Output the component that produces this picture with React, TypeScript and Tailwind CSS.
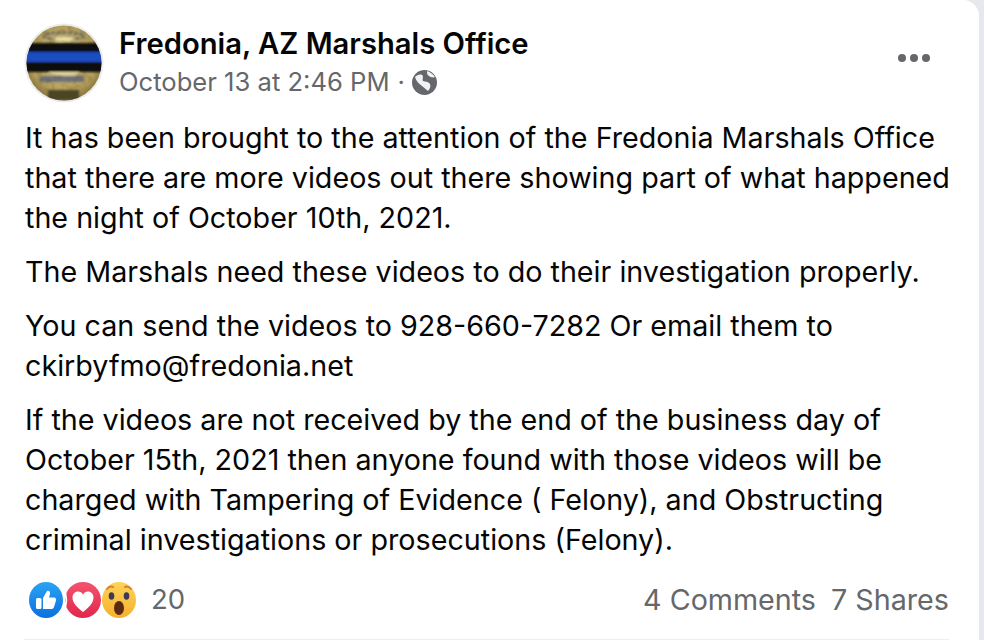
import React from 'react';

const lines: string[][] = [
  [
    'It has been brought to the attention of the Fredonia Marshals Office',
    'that there are more videos out there showing part of what happened',
    'the night of October 10th, 2021.',
  ],
  ['The Marshals need these videos to do their investigation properly.'],
  ['You can send the videos to 928-660-7282 Or email them to', 'ckirbyfmo@fredonia.net'],
  [
    'If the videos are not received by the end of the business day of',
    'October 15th, 2021 then anyone found with those videos will be',
    'charged with Tampering of Evidence ( Felony), and Obstructing',
    'criminal investigations or prosecutions (Felony).',
  ],
];

const Badge = () => (
  <svg width="80" height="80" viewBox="0 0 80 80" className="shrink-0">
    <defs>
      <radialGradient id="gold" cx="50%" cy="45%" r="58%">
        <stop offset="0%" stopColor="#d6c483" />
        <stop offset="70%" stopColor="#b59e5c" />
        <stop offset="100%" stopColor="#6d5d2e" />
      </radialGradient>
      <clipPath id="round">
        <circle cx="40" cy="40" r="37.500" />
      </clipPath>
      <filter id="mottle" x="0" y="0" width="100%" height="100%">
        <feTurbulence type="fractalNoise" baseFrequency="0.16" numOctaves="2" seed="4" />
        <feColorMatrix values="0 0 0 0 0.28  0 0 0 0 0.22  0 0 0 0 0.06  1.8 0 0 0 -0.75" />
      </filter>
      <filter id="soft">
        <feGaussianBlur stdDeviation="0.8" />
      </filter>
    </defs>
    <circle cx="40" cy="40" r="39.500" fill="#ececec" />
    <g clipPath="url(#round)">
      <rect width="80" height="80" fill="url(#gold)" />
      <rect width="80" height="80" filter="url(#mottle)" />
      <g filter="url(#soft)">
        <ellipse cx="40" cy="13" rx="20" ry="3.500" fill="none" stroke="#6a6b66" strokeWidth="2.500" strokeDasharray="4 1.500" />
        <ellipse cx="40" cy="16" rx="10" ry="2" fill="#eadfae" />
        <ellipse cx="40" cy="50" rx="15" ry="2" fill="#e3d8a8" />
        <rect x="16" y="53" width="44" height="6" rx="2" fill="#2f4186" opacity="0.55" />
        <rect x="24" y="67" width="31" height="10" fill="#4b4526" />
        <rect x="0" y="20" width="80" height="10" fill="#0b0b0d" />
        <rect x="0" y="29" width="80" height="11" fill="#1a4ec0" />
        <rect x="0" y="39" width="80" height="10" fill="#0b0b0d" />
      </g>
    </g>
  </svg>
);

const Globe = () => (
  <svg width="25" height="25" viewBox="0 0 25 25">
    <circle cx="12.500" cy="12.500" r="12.500" fill="#65676b" />
    <path d="M3 7c2-2 5-3 7-2 2 1 0 4 1 6 2 1 5 0 7 3 1 2 0 5-2 7-2-2-4-3-6-5-3-2-6-5-7-9z" fill="#f0f2f5" />
    <path d="M15 1c3 1 6 3 8 6-2 1-5 0-6-1-2-1-2-3-2-5z" fill="#f0f2f5" />
  </svg>
);

const Reactions = () => (
  <div className="flex items-center">
    <svg width="34" height="36" viewBox="0 0 34 36" className="shrink-0">
      <defs>
        <linearGradient id="like" x1="0" y1="0" x2="0" y2="1">
          <stop offset="0%" stopColor="#2aa4f4" />
          <stop offset="100%" stopColor="#0b6fe0" />
        </linearGradient>
      </defs>
      <ellipse cx="17" cy="18" rx="17" ry="18" fill="url(#like)" />
      <rect x="7" y="16" width="5.500" height="11" rx="1.500" fill="#fff" />
      <path d="M14 16l4-7c2-1 3.500 1 3 3l-1 3.500h5c2 0 2.500 2 2 3l-2 6.500c-.5 1.500-1.500 2-3 2h-8z" fill="#fff" />
    </svg>
    <svg width="38" height="36" viewBox="0 0 38 36" className="shrink-0">
      <defs>
        <linearGradient id="love" x1="0" y1="0" x2="0" y2="1">
          <stop offset="0%" stopColor="#f3536e" />
          <stop offset="100%" stopColor="#e2264d" />
        </linearGradient>
      </defs>
      <ellipse cx="20" cy="18" rx="18" ry="18" fill="url(#love)" />
      <path d="M20 30C14 25 9.500 21 9.500 15.500c0-3.500 2.500-6 5.500-6 2.200 0 4 1.200 5 3.200 1-2 2.800-3.200 5-3.200 3 0 5.500 2.500 5.500 6 0 5.500-4.500 9.500-10.500 14.500z" fill="#fff" />
      <path d="M1 8c3 6 3 14 0 20" stroke="#fff" strokeWidth="2" fill="none" />
    </svg>
    <svg width="34" height="36" viewBox="0 0 34 36" className="shrink-0 ml-[1px]">
      <defs>
        <linearGradient id="wow" x1="0" y1="0" x2="0" y2="1">
          <stop offset="0%" stopColor="#fed35a" />
          <stop offset="100%" stopColor="#f6b02c" />
        </linearGradient>
      </defs>
      <ellipse cx="17" cy="18" rx="17" ry="18" fill="url(#wow)" />
      <path d="M5 7c1.500-2 4-3 6-2M23 5c2-1 4.500 0 6 2" stroke="#d9822b" strokeWidth="2" fill="none" strokeLinecap="round" />
      <ellipse cx="9.500" cy="14" rx="2.800" ry="3.800" fill="#3b3a5a" />
      <ellipse cx="24.500" cy="14" rx="2.800" ry="3.800" fill="#3b3a5a" />
      <ellipse cx="17" cy="26" rx="5" ry="7" fill="#5a2a12" />
    </svg>
  </div>
);

export default function App() {
  return (
    <div className="w-[984px] h-[640px] overflow-hidden bg-[#e6e8ed] font-['Inter',sans-serif]">
      <div className="w-[979px] h-[640px] bg-white rounded-tr-[16px] pl-[24px] pr-[30px] flex flex-col">
        <header className="flex items-start pt-[23px]">
          <Badge />
          <div className="ml-[15px] flex-1 pt-[2px]">
            <div className="text-[29.2px] leading-[38px] font-semibold text-[#050505]">Fredonia, AZ Marshals Office</div>
            <div className="flex items-center text-[25.6px] leading-[38px] text-[#65676b]">
              October 13 at 2:46 PM
              <span className="ml-[8px] mr-[7px]">·</span>
              <Globe />
            </div>
          </div>
          <div className="flex gap-[4px] mt-[31px] mr-[19px]">
            <span className="w-[8px] h-[8px] rounded-full bg-[#65676b]" />
            <span className="w-[8px] h-[8px] rounded-full bg-[#65676b]" />
            <span className="w-[8px] h-[8px] rounded-full bg-[#65676b]" />
          </div>
        </header>
        <main className="mt-[15px] flex flex-col gap-[14px] pl-[1px] text-[28.7px] leading-[40px] text-[#050505]">
          {lines.map((para, i) => (
            <div key={i}>
              {para.map((l) => (
                <div key={l} className="whitespace-nowrap">{l}</div>
              ))}
            </div>
          ))}
        </main>
        <footer className="mt-[21px] h-[59px] pb-[21px] flex items-center border-b border-[#eceef0]">
          <div className="ml-[5px]"><Reactions /></div>
          <span className="ml-[15px] text-[27.5px] text-[#65676b]">20</span>
          <div className="ml-auto flex gap-[15px] text-[28.7px] text-[#65676b]">
            <span>4 Comments</span>
            <span>7 Shares</span>
          </div>
        </footer>
      </div>
    </div>
  );
}
